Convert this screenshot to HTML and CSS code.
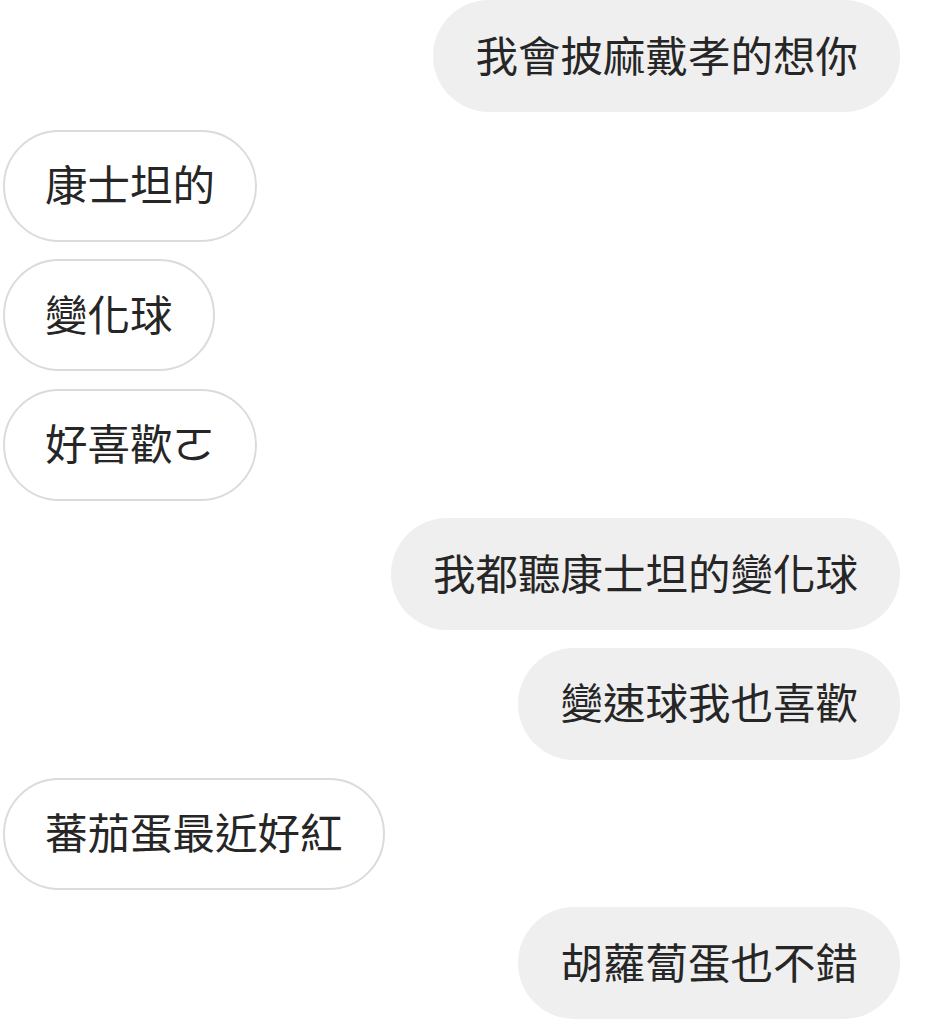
FILE: index.html
```html
<!DOCTYPE html>
<html lang="zh-Hant">
<head>
    <meta charset="UTF-8">
    <meta name="viewport" content="width=device-width, initial-scale=1.0">
    <title>聊天</title>
    <link rel="stylesheet" href="styles.css">
</head>
<body>
    <div class="chat">
        <!-- 訊息列表 -->
        <div class="msg sent">我會披麻戴孝的想你</div>
        <div class="msg received">康士坦的</div>
        <div class="msg received">變化球</div>
        <div class="msg received">好喜歡ㄛ</div>
        <div class="msg sent">我都聽康士坦的變化球</div>
        <div class="msg sent">變速球我也喜歡</div>
        <div class="msg received">蕃茄蛋最近好紅</div>
        <div class="msg sent">胡蘿蔔蛋也不錯</div>
    </div>
</body>
</html>
```

FILE: styles.css
```css
* { box-sizing: border-box;
}

body {
    margin: 0;
    background: #fff;
    font-family: "Noto Sans CJK TC", "Noto Sans", sans-serif;
    color: #262626;
}
.chat {
    display: flex;
    flex-direction: column;
    gap: 17.6px;
    padding: 0 31px 0 3px;
}
.msg {
    display: flex;
    align-items: center;
    height: 112px;
    padding: 0 42px 6px;
    border-radius: 56px;
    font-size: 42.5px;
    white-space: nowrap;
}
.sent {
    align-self: flex-end;
    background: #efefef;
}
.received {
    align-self: flex-start;
    background: #fff;
    border: 2px solid #dbdbdb;
    padding: 0 40px 6px;
}
```
